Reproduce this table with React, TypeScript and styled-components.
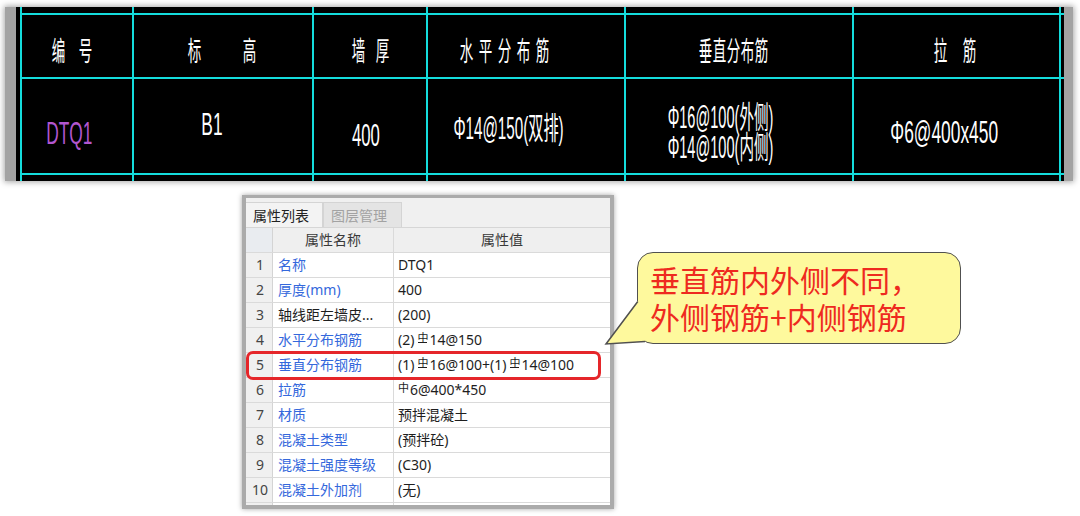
import React from "react";
import styled, { createGlobalStyle } from "styled-components";

const GlobalStyle = createGlobalStyle`
  html, body { margin: 0; padding: 0; background: #ffffff; }
  body { font-family: "Noto Sans", "Noto Sans CJK SC", sans-serif; }
  * { box-sizing: border-box; }
`;

const Page = styled.div`
  position: relative;
  width: 1080px;
  height: 516px;
  overflow: hidden;
  background: #ffffff;
  padding-top: 7px;
`;

/* ---------- CAD drawing (top) ---------- */

const Drawing = styled.div`
  margin-left: 5px;
  width: 1068px;
  height: 174px;
  background: #000;
  border-left: 11px solid #a3a3a3;
  border-right: 9px solid #a3a3a3;
  box-shadow: 0 0 6px 1px rgba(0, 0, 0, 0.35);
  overflow: hidden;
`;

const CadGrid = styled.div`
  margin-left: 4px;
  height: 100%;
  display: grid;
  grid-template-columns: 110px 178px 112px 196px 226px 205px 1fr;
  grid-template-rows: 6px 62px 94px 1fr;
  gap: 2px;
  padding-left: 2px;
  background: #14dcdc;
`;

const CadCell = styled.div<{ $dx?: number; $dy?: number }>`
  background: #000;
  display: flex;
  flex-direction: column;
  align-items: center;
  justify-content: center;
  overflow: visible;
  & > * {
    position: relative;
    left: ${(p) => p.$dx ?? 0}px;
    top: ${(p) => p.$dy ?? 0}px;
  }
`;

const CadText = styled.span<{ $size?: number; $scale?: number; $color?: string }>`
  display: inline-block;
  flex: none;
  white-space: pre;
  font-family: "Liberation Sans", "Noto Sans CJK SC", sans-serif;
  font-size: ${(p) => p.$size ?? 31}px;
  line-height: 27px;
  height: 27px;
  color: ${(p) => p.$color ?? "#ffffff"};
  transform: scaleX(${(p) => p.$scale ?? 0.55});
`;

const CadLines = styled.div<{ $lineGap: number }>`
  display: flex;
  flex-direction: column;
  align-items: center;
  gap: ${(p) => p.$lineGap}px;
`;

const CharRow = styled.div<{ $gap: number }>`
  display: flex;
  gap: ${(p) => p.$gap}px;
`;

const CharBox = styled.span`
  width: 13px;
  display: flex;
  justify-content: center;
`;

const HeadChar = styled(CadText)`
  font-family: "Noto Sans CJK SC", sans-serif;
  font-size: 27px;
  line-height: 30px;
  height: 30px;
  transform: scaleX(0.5);
`;

function CadLabel({ text, gap }: { text: string; gap: number }) {
  return (
    <CharRow $gap={gap}>
      {[...text].map((c, i) => (
        <CharBox key={i}>
          <HeadChar>{c}</HeadChar>
        </CharBox>
      ))}
    </CharRow>
  );
}

/* ---------- Property panel ---------- */

const Panel = styled.div`
  margin: 14px 0 0 242px;
  width: 372px;
  height: 314px;
  border: 4px solid #ababab;
  border-top-width: 3px;
  box-shadow: 0 0 5px rgba(0, 0, 0, 0.35);
  background: #ffffff;
  display: flex;
  flex-direction: column;
  overflow: hidden;
  font-family: "Noto Sans", "Noto Sans CJK SC", sans-serif;
  font-size: 14px;
`;

const TabBar = styled.div`
  height: 30px;
  flex: none;
  background: #f0f0f0;
  display: flex;
  align-items: flex-end;
  border-bottom: 1px solid #d6d6d6;
`;

const Tab = styled.div<{ $active?: boolean }>`
  height: 25px;
  padding: 0 7px;
  display: flex;
  align-items: center;
  font-size: 14px;
  color: ${(p) => (p.$active ? "#222" : "#a2a2a2")};
  background: ${(p) => (p.$active ? "#f3f3f3" : "#e4e4e4")};
  border: 1px solid #d4d4d4;
  border-bottom: none;
  border-left: ${(p) => (p.$active ? "none" : "1px solid #d4d4d4")};
  width: ${(p) => (p.$active ? 77 : 79)}px;
`;

const Rows = styled.div`
  flex: 1;
  overflow: hidden;
`;

const Row = styled.div<{ $head?: boolean }>`
  display: grid;
  grid-template-columns: 27px 121px 1fr;
  height: 25px;
  border-bottom: 1px solid #dadada;
  background: ${(p) => (p.$head ? "#efefef" : "#ffffff")};
`;

const NumCell = styled.div<{ $corner?: boolean }>`
  background: ${(p) => (p.$corner ? "#e9ecf0" : "#f0f0f0")};
  border-right: 1px solid #d4d4d4;
  color: #444;
  display: flex;
  align-items: center;
  justify-content: center;
  padding-left: 2px;
  line-height: 24px;
`;

const NameCell = styled.div<{ $plain?: boolean; $head?: boolean }>`
  border-right: 1px solid #dadada;
  color: ${(p) => (p.$head ? "#3a3a3a" : p.$plain ? "#1e1e1e" : "#3468dc")};
  padding-left: ${(p) => (p.$head ? 0 : 5)}px;
  text-align: ${(p) => (p.$head ? "center" : "left")};
  line-height: 24px;
  white-space: nowrap;
  overflow: hidden;
`;

const ValueCell = styled.div<{ $head?: boolean }>`
  color: ${(p) => (p.$head ? "#3a3a3a" : "#1e1e1e")};
  padding-left: ${(p) => (p.$head ? 0 : 4)}px;
  text-align: ${(p) => (p.$head ? "center" : "left")};
  line-height: 24px;
  white-space: nowrap;
  overflow: hidden;
`;

const Rebar = styled.span<{ $grade: 1 | 3 }>`
  position: relative;
  display: inline-block;
  font-family: "Noto Sans CJK SC", sans-serif;
  font-size: 11px;
  line-height: 1;
  vertical-align: 3px;
  margin: 0 1px 0 ${(p) => (p.$grade === 3 ? 3 : 0)}px;
  &::after {
    content: "";
    display: ${(p) => (p.$grade === 3 ? "block" : "none")};
    position: absolute;
    left: 1px;
    right: 1px;
    bottom: 0;
    height: 1px;
    background: currentColor;
  }
`;

/* ---------- Annotations ---------- */

const Highlight = styled.div`
  position: absolute;
  left: 246px;
  top: 351px;
  width: 355px;
  height: 29px;
  border: 3px solid #e5262a;
  border-radius: 7px;
`;

const Bubble = styled.div`
  position: absolute;
  left: 637px;
  top: 252px;
  width: 324px;
  height: 92px;
  background: #fef99d;
  border: 1.5px solid #505050;
  border-radius: 16px;
  padding: 9px 0 0 12px;
  font-family: "Noto Sans CJK SC", sans-serif;
  font-size: 30px;
  color: #ee2a1f;
  white-space: nowrap;
`;

const BubbleLine = styled.div`
  height: 37px;
  line-height: 35px;
  overflow: visible;
`;

const Tail = styled.svg`
  position: absolute;
  left: 600px;
  top: 295px;
  width: 50px;
  height: 55px;
  overflow: visible;
`;

const props: { name: string; value: React.ReactNode; plain?: boolean }[] = [
  { name: "名称", value: "DTQ1" },
  { name: "厚度(mm)", value: "400" },
  { name: "轴线距左墙皮...", value: "(200)", plain: true },
  {
    name: "水平分布钢筋",
    value: (
      <>
        (2)<Rebar $grade={3}>中</Rebar>14@150
      </>
    ),
  },
  {
    name: "垂直分布钢筋",
    value: (
      <>
        (1)<Rebar $grade={3}>中</Rebar>16@100+(1)<Rebar $grade={3}>中</Rebar>14@100
      </>
    ),
  },
  {
    name: "拉筋",
    value: (
      <>
        <Rebar $grade={1}>中</Rebar>6@400*450
      </>
    ),
  },
  { name: "材质", value: "预拌混凝土" },
  { name: "混凝土类型", value: "(预拌砼)" },
  { name: "混凝土强度等级", value: "(C30)" },
  { name: "混凝土外加剂", value: "(无)" },
];

export default function App() {
  return (
    <Page>
      <GlobalStyle />
      <Drawing>
        <CadGrid>
          {Array.from({ length: 7 }).map((_, i) => (
            <CadCell key={`t${i}`} />
          ))}

          <CadCell $dx={-5} $dy={4}>
            <CadLabel text="编号" gap={14} />
          </CadCell>
          <CadCell $dx={-1} $dy={4}>
            <CadLabel text="标高" gap={42} />
          </CadCell>
          <CadCell $dy={4}>
            <CadLabel text="墙厚" gap={11} />
          </CadCell>
          <CadCell $dx={-22} $dy={4}>
            <CadLabel text="水平分布筋" gap={6} />
          </CadCell>
          <CadCell $dx={-6} $dy={4}>
            <CadLabel text="垂直分布筋" gap={1} />
          </CadCell>
          <CadCell $dx={-2} $dy={4}>
            <CadLabel text="拉筋" gap={16} />
          </CadCell>
          <CadCell />

          <CadCell $dx={-8} $dy={7}>
            <CadText $color="#b256cf" $scale={0.56}>DTQ1</CadText>
          </CadCell>
          <CadCell $dx={-11} $dy={-2}>
            <CadText $scale={0.56}>B1</CadText>
          </CadCell>
          <CadCell $dx={-4} $dy={9}>
            <CadText $scale={0.54}>400</CadText>
          </CadCell>
          <CadCell $dx={-17} $dy={2}>
            <CadText $scale={0.49}>Φ14@150(双排)</CadText>
          </CadCell>
          <CadCell $dx={-18} $dy={6}>
            <CadLines $lineGap={3}>
              <CadText $scale={0.47}>Φ16@100(外侧)</CadText>
              <CadText $scale={0.47}>Φ14@100(内侧)</CadText>
            </CadLines>
          </CadCell>
          <CadCell $dx={-12} $dy={6}>
            <CadText $scale={0.56}>Φ6@400x450</CadText>
          </CadCell>
          <CadCell />

          {Array.from({ length: 7 }).map((_, i) => (
            <CadCell key={`b${i}`} />
          ))}
        </CadGrid>
      </Drawing>

      <Panel>
        <TabBar>
          <Tab $active>属性列表</Tab>
          <Tab>图层管理</Tab>
        </TabBar>
        <Rows>
          <Row $head>
            <NumCell $corner />
            <NameCell $head>属性名称</NameCell>
            <ValueCell $head>属性值</ValueCell>
          </Row>
          {props.map((r, i) => (
            <Row key={r.name}>
              <NumCell>{i + 1}</NumCell>
              <NameCell $plain={r.plain}>{r.name}</NameCell>
              <ValueCell>{r.value}</ValueCell>
            </Row>
          ))}
          <Row>
            <NumCell />
            <NameCell />
            <ValueCell />
          </Row>
        </Rows>
      </Panel>

      <Highlight />
      <Bubble>
        <BubbleLine>垂直筋内外侧不同，</BubbleLine>
        <BubbleLine>外侧钢筋+内侧钢筋</BubbleLine>
      </Bubble>
      <Tail viewBox="0 0 50 55">
        <polygon points="37.5,6 6,49 45,46.5 48,40 48,6" fill="#fef99d" />
        <polyline
          points="37.8,6.5 6,49 45,46.5"
          fill="none"
          stroke="#505050"
          strokeWidth="1.5"
          strokeLinejoin="miter"
        />
      </Tail>
    </Page>
  );
}
